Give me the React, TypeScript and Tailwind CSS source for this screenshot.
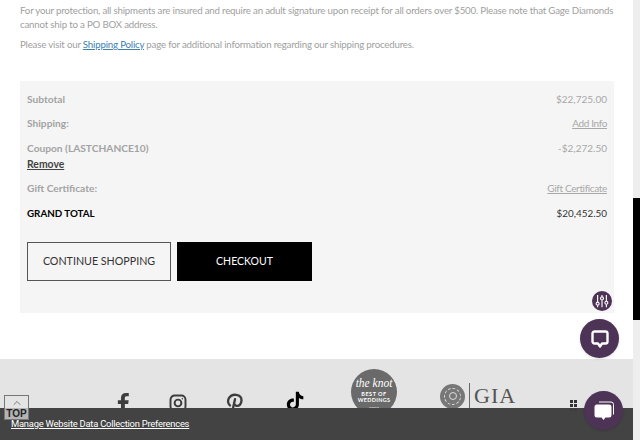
import { ChevronUp } from "lucide-react";

const FONT = "font-['Lato','Liberation_Sans',sans-serif]";

function SummaryRow({ label, value, link }: { label: string; value: string; link?: boolean }) {
  return (
    <div className="flex h-[24.5px] items-center justify-between">
      <span className="text-[10.200px] font-bold text-[#a3a3a3]">{label}</span>
      <span className={`text-[10px] text-[#a8a8a8] ${link ? "tracking-[-0.35px] underline" : ""}`}>{value}</span>
    </div>
  );
}

function SocialIcons() {
  return (
    <div className="flex items-start pl-[112px]">
      <svg className="mt-[33px] h-[22px] w-[22px] shrink-0 text-[#3d3d3d]" viewBox="0 0 24 24" fill="currentColor">
        <path d="M14 24V13h3.600l.6-4H14V6.600c0-1.200.4-2 2-2h2.300V1.100C17.900 1 16.600 1 15.300 1 12 1 9.800 3 9.800 6.300V9H6.400v4h3.400v11z" />
      </svg>
      <svg className="ml-[35px] mt-[35px] h-[18px] w-[18px] shrink-0 text-[#3d3d3d]" viewBox="0 0 24 24" fill="none" stroke="currentColor" strokeWidth="2.600">
        <rect x="2" y="2" width="20" height="20" rx="5.500" />
        <circle cx="12" cy="12" r="4.500" />
        <circle cx="17.800" cy="6.200" r="1" fill="currentColor" stroke="none" />
      </svg>
      <svg className="ml-[38px] mt-[34px] h-[20px] w-[20px] shrink-0 text-[#3d3d3d]" viewBox="0 0 24 24" fill="none" stroke="currentColor" strokeWidth="2.800" strokeLinecap="round">
        <path d="M6 15C3.500 12.500 3 9.500 4.500 6.500 6.500 3 10 1.800 13.500 2.200c4 .5 6.500 3.300 6.300 7-.2 4-2.700 6.500-5.500 6.300-1.500-.1-2.500-1-3-2" />
        <path d="M12 7.500 8.500 23" />
      </svg>
      <svg className="ml-[40px] mt-[32px] h-[20px] w-[20px] shrink-0 text-black" viewBox="0 0 24 24" fill="currentColor">
        <path d="M13 1h3.600c.3 3 2.200 5 5.400 5.300v3.700c-2 0-3.800-.6-5.300-1.700v7.700c0 4.300-3.100 7.500-7.300 7.500S2.200 20.300 2.200 16.200c0-4.500 3.700-7.700 8.400-7.200v3.900c-2.500-.5-4.600 1-4.600 3.300 0 2 1.500 3.500 3.400 3.500S13 18.200 13 16z" />
      </svg>
      <div className="ml-[46px] mt-[10px] flex h-[46px] w-[46px] shrink-0 flex-col items-center rounded-full bg-[#6a6a6a] pt-[9px] leading-none text-white">
        <span className="font-['Liberation_Serif',serif] text-[11.500px] italic">the knot</span>
        <span className="mt-[2px] text-[5.500px] font-bold tracking-[0.5px]">BEST OF</span>
        <span className="mt-[1px] text-[5.500px] font-bold tracking-[0.3px]">WEDDINGS</span>
        <span className="mt-[3px] text-[4.500px]">2022</span>
      </div>
      <div className="ml-[43px] mt-[24px] flex shrink-0 items-center">
        <div className="flex h-[25px] w-[25px] items-center justify-center rounded-full bg-[#777]">
          <div className="flex h-[17px] w-[17px] items-center justify-center rounded-full border border-dashed border-[#ddd]">
            <div className="h-[8px] w-[8px] rounded-full border border-[#ddd]" />
          </div>
        </div>
        <div className="ml-[4px] h-[26px] w-px bg-[#666]" />
        <span className="ml-[4px] font-['Liberation_Serif',serif] text-[22px] leading-none tracking-[1px] text-[#555]">GIA</span>
      </div>
    </div>
  );
}

export default function App() {
  return (
    <div className={`relative flex h-[440px] w-[640px] overflow-hidden bg-white ${FONT}`}>
      <div className="flex w-[633px] flex-col">
        <div className="pl-5 pr-[12px] pt-[3px] text-[9.700px] leading-[14px] tracking-[-0.19px] text-[#a0a0a0]">
          <p>
            For your protection, all shipments are insured and require an adult signature upon receipt for all orders over $500. Please note that Gage Diamonds cannot ship to a PO BOX address.
          </p>
          <p className="mt-[6px]">
            Please visit our <span className="text-[#3b7fb0] underline">Shipping Policy</span> page for additional information regarding our shipping procedures.
          </p>
        </div>

        <div className="ml-5 mr-[19px] mt-[30px] h-[232px] bg-[#f5f5f5] px-[7px] pt-[6px]">
          <SummaryRow label="Subtotal" value="$22,725.00" />
          <SummaryRow label="Shipping:" value="Add Info" link />
          <SummaryRow label="Coupon (LASTCHANCE10)" value="-$2,272.50" />
          <div className="mt-[-4px] h-[20px] text-[10.400px] font-bold text-[#444] underline">Remove</div>
          <SummaryRow label="Gift Certificate:" value="Gift Certificate" link />
          <div className="flex h-[25px] items-center justify-between text-black">
            <span className="text-[9.800px] font-bold">GRAND TOTAL</span>
            <span className="text-[9.900px] text-[#333]">$20,452.50</span>
          </div>
          <div className="mt-[16px] flex gap-[6px]">
            <button type="button" className="flex h-[39px] w-[144px] items-center justify-center border border-[#555] text-[10.700px] text-[#333]">
              CONTINUE SHOPPING
            </button>
            <button type="button" className="flex h-[39px] w-[135px] items-center justify-center bg-black text-[10.500px] text-white">
              CHECKOUT
            </button>
          </div>
        </div>

        <div className="mt-[46px] flex-1 bg-[#e4e4e4]">
          <SocialIcons />
        </div>
      </div>

      {/* scrollbar */}
      <div className="flex w-[7px] flex-col bg-[#eeeeee] pt-[198px]">
        <div className="h-[122px] bg-black" />
      </div>

      {/* cookie bar */}
      <div className="absolute bottom-0 left-0 flex h-[32px] w-[633px] items-start bg-[#434343] pl-[11px] pt-[9px] font-['Roboto',sans-serif] text-[9.400px] leading-[14px] tracking-[-0.23px] text-white underline">
        Manage Website Data Collection Preferences
      </div>

      {/* back to top */}
      <div className="absolute left-[4px] top-[395px] flex h-[25px] w-[25px] flex-col items-center border border-[#777] bg-[#e4e4e4]/70 leading-none">
        <ChevronUp className="mt-[1px] h-[12px] w-[14px] text-[#555]" strokeWidth={1.500} />
        <span className="font-['Liberation_Sans',sans-serif] text-[10px] font-bold text-[#222]">TOP</span>
      </div>

      {/* dots behind the chat */}
      <div className="absolute left-[570px] top-[400px] grid grid-cols-2 gap-[1px]">
        {[0, 1, 2, 3, 4, 5].map((i) => (
          <span key={i} className={`h-[3px] w-[3px] ${i < 4 ? "bg-[#333]" : "bg-[#3d3d3d]"}`} />
        ))}
      </div>

      {/* accessibility filter */}
      <div className="absolute left-[592px] top-[291px] flex h-[20px] w-[20px] items-center justify-center rounded-full bg-[#4d3355]">
        <svg className="h-[14px] w-[14px] text-white" viewBox="0 0 16 16" fill="none" stroke="currentColor" strokeWidth="1.300">
          <path d="M3 1v8M3 13v2M8 1v2M8 7v8M13 1v7M13 12v3" />
          <circle cx="3" cy="11" r="1.700" />
          <circle cx="8" cy="5" r="1.700" />
          <circle cx="13" cy="10" r="1.700" />
        </svg>
      </div>

      {/* chat button */}
      <div className="absolute left-[580px] top-[319px] flex h-[39px] w-[39px] items-center justify-center rounded-full bg-[#4d3355] shadow-sm">
        <svg className="h-[20px] w-[20px] text-white" viewBox="0 0 20 20" fill="none" stroke="currentColor" strokeWidth="2.400" strokeLinejoin="round">
          <path d="M4.500 2.500h11a2 2 0 0 1 2 2v8a2 2 0 0 1-2 2h-3.500L10 17.500 8 14.500H4.500a2 2 0 0 1-2-2v-8a2 2 0 0 1 2-2z" />
        </svg>
      </div>

      {/* messages button */}
      <div className="absolute left-[584px] top-[391px] flex h-[39px] w-[39px] items-center justify-center rounded-full bg-[#4d3355] shadow-sm">
        <svg className="h-[22px] w-[22px]" viewBox="0 0 22 22">
          <path d="M6 2h12a2.500 2.500 0 0 1 2.500 2.500v10" fill="none" stroke="#ffffff" strokeWidth="1" />
          <path d="M4 4.500h12a2.500 2.500 0 0 1 2.500 2.500v8a2.500 2.500 0 0 1-2.500 2.500h-3.500L10.500 20l-2-2.500H4A2.500 2.500 0 0 1 1.500 15V7A2.500 2.500 0 0 1 4 4.500z" fill="#ffffff" />
        </svg>
      </div>
    </div>
  );
}
